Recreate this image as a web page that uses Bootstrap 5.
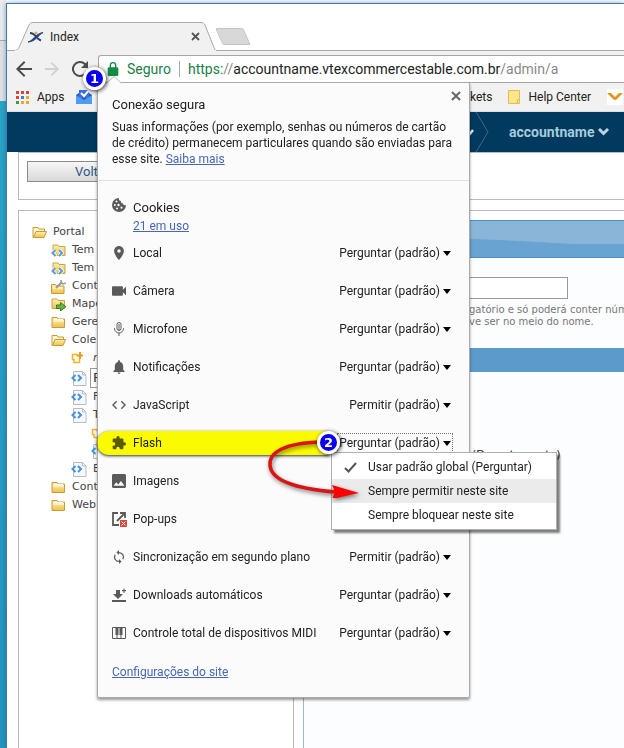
<!DOCTYPE html>
<html lang="pt-br">
<head>
<meta charset="utf-8">
<meta name="viewport" content="width=device-width, initial-scale=1">
<title>Index</title>
<link href="https://cdn.jsdelivr.net/npm/bootstrap@5.3.0/dist/css/bootstrap.min.css" rel="stylesheet">
<style>
  :root { --ui: Roboto, "Open Sans", sans-serif; --page: "DejaVu Sans", sans-serif; --ink: #5a5a5a; }
  body { font-family: var(--ui); font-size: 12px; line-height: 16px; color: #222; overflow: hidden; height: 100vh; }
  svg { flex: none; display: block; }
  .desktop { width: 6px; flex: none; background: linear-gradient(#e9edf2 40px, #aaa 40px, #aaa 41px, #dfe2e6 41px, #dfe2e6 101px, #2aa5c8 101px, #2495c0); }
  .browser { border: solid #3a7db8; border-width: 1px 0 0 1px; margin-top: 3px; min-width: 0; box-shadow: 0 0 5px rgba(30,70,110,.5); }
  .tab-strip { height: 47px; padding-left: 5px; border-bottom: 1px solid #a9a9a9; }
  .tab-item { width: 207px; height: 29px; margin-bottom: -1px; padding: 0 19px 0 16px; }
  .tab-shape { position: absolute; inset: 0; width: 100%; height: 100%; }
  .tab-icon { margin-right: 7px; }
  .new-tab { width: 28px; height: 17px; margin: 0 0 5px 0; transform: skewX(24deg); background: #d8d8d8; border: 1px solid #c4c4c4; border-radius: 2px; }
  .plain { background: none; border: 0; padding: 0; color: inherit; }
  .tool-bar { background: #f1f1f1; padding-top: 4px; }
  .nav-tools { width: 91px; padding-left: 8px; gap: 11px; color: #4c4c4c; }
  .omnibox { height: 28px; border: 1px solid #a6a6a6; border-right: 0; border-radius: 3px 0 0 0; padding-left: 8px; font-size: 14px; white-space: nowrap; }
  .secure { color: #188048; }
  .url-sep { width: 1px; height: 16px; background: #aaa; margin: 0 8px; }
  .pin-one { left: -16px; top: 11px; }
  .pin { position: absolute; z-index: 6; width: 23px; height: 23px; border-radius: 50%; background: #0b00ee; border: 3px solid #fff; box-shadow: 1px 1px 4px rgba(0,0,0,.8); color: #fff; font: bold 13px/17px var(--page); text-align: center; }
  .marks { height: 29px; background: #f1f1f1; padding-left: 9px; border-bottom: 1px solid #ddd; }
  .marks a { color: #222; text-decoration: none; }
  .marks-start { width: 454px; gap: 11px; }
  .site-nav { height: 40px; background: #013a5e; }
  .site-nav-start { width: 460px; }
  .account { font: bold 14px/20px Roboto, "Open Sans", sans-serif; color: #a6cbdc; }
  .site { padding-left: 11px; font-family: var(--page); font-size: 11px; }
  .bar-box { height: 48px; border: solid #bbb; border-width: 1px 0 1px 1px; padding: 8px 8px 0; margin-bottom: 10px; }
  .back { width: 140px; height: 21px; border: 1px solid #8c8c8c; background: linear-gradient(#f6f6f6, #d9d9d9); color: #2e5883; font: 13px/18px var(--ui); padding: 0 0 0 47px; text-align: left; }
  .main-box { border: solid #bbb; border-width: 1px 0 0 1px; }
  .tree { width: 275px; border-right: 1px solid #bbb; padding: 12px 0 0 13px; color: #444; }
  .tree li { height: 18px; gap: 6px; }
  .tree .lv1 { padding-left: 19px; }
  .tree .lv2 { padding-left: 39px; }
  .tree .lv3 { padding-left: 59px; }
  .tree .tall { height: 21px; }
  .rename { width: 60px; height: 20px; border: 1px solid #999; padding: 0 2px; font-size: 13px; margin-left: -3px; color: #333; }
  .panel { margin: 9px 0 0 9px; border-left: 1px solid #9dbbd0; background: #fcfdfe; min-width: 0; overflow: hidden; }
  .panel-head { height: 38px; border: solid #4b8fc4; border-width: 1px 0; background: #69a3d1; }
  .panel-head svg { width: 100%; height: 36px; }
  .field { width: 264px; height: 22px; border: 1px solid #999; background: #fff; display: block; margin-top: 19px; border-radius: 0; }
  .hint { padding: 5px 0 0 165px; font-size: 10px; line-height: 12px; color: #777; white-space: nowrap; margin: 0; }
  .band { height: 24px; background: #5b9acb; margin: 20px 0 75px; }
  .dept { padding-left: 168px; }
  .site-info { position: absolute; z-index: 3; top: 26px; left: -2px; width: 373px; background: #fbfbfb; border: 1px solid #aaa; border-radius: 2px; box-shadow: 0 2px 3px rgba(0,0,0,.4); font-size: 12px; color: #222; }
  .notch { position: absolute; top: -7px; left: 8px; }
  .info-head { padding: 12px 13px 13px 14px; border-bottom: 1px solid #e0e0e0; }
  .info-head h1 { font-size: 13px; font-weight: 400; line-height: 20px; margin: 0 0 4px; }
  .info-close { position: absolute; top: 8px; right: 8px; color: #666; }
  .site-info a { color: #4767b4; }
  .cookies { padding: 17px 14px 0; }
  .cookies-title { font-size: 13px; line-height: 20px; }
  .glyph { width: 14px; height: 14px; margin-right: 7px; fill: var(--ink); }
  .perm { height: 38px; padding: 0 16px 0 14px; position: relative; }
  .perm select { appearance: none; border: 0; background: none; padding: 0 13px 0 0; text-align: right; color: #222; height: 20px; outline: 0; }
  .pick { position: relative; }
  .pick::after { content: ""; position: absolute; right: 2px; top: 8px; border: 4px solid transparent; border-top: 5px solid #000; border-bottom: 0; pointer-events: none; }
  .pick.focused::before { content: ""; position: absolute; inset: 0 0 0 -2px; border: 1px dotted #777; pointer-events: none; }
  .marker { position: absolute; left: -1px; top: 7px; width: 232px; height: 24px; border-radius: 12px 0 0 12px; background: #ff0; mix-blend-mode: multiply; box-shadow: 0 1px 3px #333; }
  .pin-two { left: 219px; top: 7px; }
  .choices { position: absolute; z-index: 4; left: 233px; top: 28px; width: 226px; background: #fff; border: 1px solid #b0b0b0; box-shadow: 3px 3px 2px rgba(0,0,0,.5); padding: 2px 0; }
  .choices button { display: flex; align-items: center; width: 100%; height: 24px; padding-left: 12px; text-align: left; }
  .choices button.hot { background: #ebebeb; }
  .choices svg { margin-right: 11px; }
  .swoop { position: absolute; z-index: 5; left: 165px; top: 10px; filter: drop-shadow(1px 2px 2px rgba(0,0,0,.5)); }
  .info-foot { padding: 10px 14px 15px; line-height: 20px; }
</style>
<script src="https://cdn.jsdelivr.net/npm/bootstrap@5.3.0/dist/js/bootstrap.bundle.min.js"></script>
</head>
<body class="d-flex">
<svg width="0" height="0" class="position-absolute" aria-hidden="true">
  <defs>
    <linearGradient id="gold" x2="0" y2="1"><stop stop-color="#fff3ae"/><stop offset="1" stop-color="#f0c04c"/></linearGradient>
    <symbol id="folder" viewBox="0 0 15 13"><path d="M1 11.500V1.500h5l1 1.500h6.500v8.500z" fill="url(#gold)" stroke="#c99a3c"/><path d="M3 3.500h9M2 5h11" stroke="#fff" /></symbol>
    <symbol id="open" viewBox="0 0 15 13"><path d="M1 11.500V1.500h5l1 1.500h5.500v2" fill="#fff6cf" stroke="#c99a3c"/><path d="M1.300 11.500L4 5.500h10.500l-2.500 6z" fill="url(#gold)" stroke="#c99a3c"/></symbol>
    <symbol id="tpl" viewBox="0 0 15 13"><path d="M2 10V1h5l1 1.500h6v9H6" fill="url(#gold)" stroke="#c9a24c"/><path d="M4.500 6L1.500 9l3 3M8 6l3 3-3 3" fill="none" stroke="#fff" stroke-width="3.500"/><path d="M4.500 6L1.500 9l3 3M8 6l3 3-3 3" fill="none" stroke="#5b9bd2" stroke-width="2"/></symbol>
    <symbol id="fix" viewBox="0 0 15 15"><path d="M.5 14.500V5.500h4l1 1.500h7.500v7.500z" fill="url(#gold)" stroke="#c99a3c"/><path d="M2 9h10" stroke="#fff"/><path d="M5 9l6-6" stroke="#999" stroke-width="2"/><path d="M10 1v3l2 1 3-1" fill="none" stroke="#999" stroke-width="1.500"/></symbol>
    <symbol id="go" viewBox="0 0 15 13"><path d="M1 10.500V1h5l1 1.500h6.500v8z" fill="url(#gold)" stroke="#c9a24c"/><path d="M5.500 7h4V4.500L15 8.700 9.500 13v-2.500h-4z" fill="#69b346" stroke="#3c7d2a"/></symbol>
    <symbol id="page" viewBox="0 0 16 16"><path d="M2.500 1.500h9l3.500 3.500v10.500H2.500z" fill="#f6f9fc" stroke="#bbb"/><path d="M11.500 1.500V5H15" fill="none" stroke="#bbb"/><path d="M4.500 5L1.500 8l3 3M7 5l3 3-3 3" fill="none" stroke="#4292dc" stroke-width="2"/></symbol>
    <symbol id="add" viewBox="0 0 12 12"><path d="M6 2.500H1.500v5H3v3h5.500V7" fill="#fffbe5" stroke="#efb431" stroke-width="1.500"/><path d="M9 0v7M5.500 3.500H12" stroke="#f09a1c" stroke-width="2"/></symbol>
  </defs>
</svg>

<div class="desktop"></div>
<div class="browser flex-grow-1 bg-white d-flex flex-column position-relative">
  <div class="tab-strip d-flex align-items-end">
    <div class="tab-item position-relative d-flex align-items-center">
      <svg class="tab-shape" viewBox="0 0 207 29" preserveAspectRatio="none"><path d="M0 29V28.500c5 0 6-1 7-3L17 3c1-2 2-2.500 4-2.500h168c2 0 3 .5 4 2.500l9 22.500c1 2 1 3 3 3V29z" fill="#f1f1f1" stroke="#a9a9a9"/><path d="M3 29h201" stroke="#f1f1f1" stroke-width="2"/></svg>
      <svg class="tab-icon position-relative" width="15" height="12" viewBox="0 0 15 12"><path d="M2 2c3 0 4.500 1.500 6 3.500S11 9 13 9.500" fill="none" stroke="#24417c" stroke-width="2"/><path d="M0 11c5-1 7-8 15-9.500C10 4 8 10.500 0 11z" fill="#24417c" stroke="#24417c"/><circle cx="8" cy="2" r="1.500" fill="#e8a433"/></svg>
      <span class="position-relative flex-grow-1">Index</span>
      <button class="plain position-relative" aria-label="Fechar guia"><svg width="9" height="9" viewBox="0 0 9 9"><path d="M1 1l7 7M8 1L1 8" stroke="#555" stroke-width="1.800"/></svg></button>
    </div>
    <button class="new-tab p-0" aria-label="Nova guia"></button>
  </div>

  <div class="tool-bar d-flex">
    <div class="nav-tools d-flex align-items-center flex-shrink-0">
      <button class="plain" aria-label="Voltar"><svg width="18" height="18" viewBox="3 3 18 18" fill="#4c4c4c"><path d="M20 11H7.830l5.590-5.590L12 4l-8 8 8 8 1.410-1.410L7.830 13H20z"/></svg></button>
      <button class="plain" aria-label="Avançar"><svg width="16" height="16" viewBox="3 3 18 18" fill="#d0d0d0"><path d="M4 11h12.170l-5.590-5.590L12 4l8 8-8 8-1.410-1.410L16.170 13H4z"/></svg></button>
      <button class="plain" aria-label="Recarregar"><svg width="18" height="18" viewBox="3 3 18 18" fill="#4c4c4c"><path d="M17.650 6.350A8 8 0 1 0 19.730 14h-2.080A6 6 0 1 1 16.220 7.780L13 11h7V4z"/></svg></button>
    </div>
    <div class="omnibox bg-white flex-grow-1 position-relative d-flex align-items-center">
      <svg width="12" height="14" viewBox="4 1 16 21" fill="#128c44"><path d="M18 9h-1V6A5 5 0 0 0 7 6v3H6c-1 0-2 1-2 2v9c0 1 1 2 2 2h12c1 0 2-1 2-2v-9c0-1-1-2-2-2zM9 9V6a3 3 0 0 1 6 0v3z"/></svg>
      <span class="secure ms-2">Seguro</span><span class="url-sep"></span>
      <span><span class="secure">https:</span><span class="text-black-50">//</span>accountname.vtexcommercestable.com.br<span class="text-black-50">/admin/a</span></span>
      <span class="pin pin-one">1</span>

      <section class="site-info" aria-label="Informações do site">
        <svg class="notch" width="16" height="8" viewBox="0 0 16 8"><path d="M0 7.500L8 .5l8 7" fill="#fbfbfb" stroke="#bbb"/></svg>
        <div class="info-head">
          <button class="info-close plain" aria-label="Fechar"><svg width="10" height="10" viewBox="0 0 10 10"><path d="M1 1l8 8M9 1L1 9" stroke="#666" stroke-width="2"/></svg></button>
          <h1>Conexão segura</h1>
          <div>Suas informações (por exemplo, senhas ou números de cartão<br>de crédito) permanecem particulares quando são enviadas para<br>esse site. <a href="#">Saiba mais</a></div>
        </div>
        <div class="cookies d-flex align-items-start">
          <svg class="glyph" viewBox="0 0 14 14"><path d="M7 0a7 7 0 1 0 7 7c-2 .8-3-.3-2.800-1.500C9.500 5.600 8.500 4.500 9 3 7.500 3 6.500 1.800 7 0z"/><g fill="#fbfbfb"><circle cx="4.500" cy="3.500" r="1"/><circle cx="2.800" cy="7" r="1"/><circle cx="6.500" cy="7" r="1.200"/><circle cx="5" cy="10.500" r="1"/><circle cx="9.500" cy="9.700" r="1.100"/></g></svg>
          <div><div class="cookies-title">Cookies</div><a href="#">21 em uso</a></div>
        </div>
        <div class="perm d-flex align-items-center">
          <svg class="glyph" viewBox="2 2 20 20"><path d="M12 2C8.130 2 5 5.130 5 9c0 5.250 7 13 7 13s7-7.750 7-13c0-3.870-3.130-7-7-7zm0 9.500a2.500 2.500 0 0 1 0-5 2.500 2.500 0 0 1 0 5z"/></svg>
          <label for="p1" class="flex-grow-1">Local</label><span class="pick"><select id="p1"><option>Perguntar (padrão)</option></select></span>
        </div>
        <div class="perm d-flex align-items-center">
          <svg class="glyph" viewBox="3 3 18 18"><path d="M17 10.500V7c0-.55-.45-1-1-1H4c-.55 0-1 .45-1 1v10c0 .55.45 1 1 1h12c.55 0 1-.45 1-1v-3.500l4 4v-11z"/></svg>
          <label for="p2" class="flex-grow-1">Câmera</label><span class="pick"><select id="p2"><option>Perguntar (padrão)</option></select></span>
        </div>
        <div class="perm d-flex align-items-center">
          <svg class="glyph" viewBox="0 0 14 14"><g fill="none" stroke="#5a5a5a"><rect x="5" y=".5" width="4" height="8" rx="2"/><path d="M6 3h2M6 5h2M6 7h2M2.500 6v.5a4.500 4.500 0 0 0 9 0V6M7 11v3"/></g></svg>
          <label for="p3" class="flex-grow-1">Microfone</label><span class="pick"><select id="p3"><option>Perguntar (padrão)</option></select></span>
        </div>
        <div class="perm d-flex align-items-center">
          <svg class="glyph" viewBox="2 2 20 20"><path d="M12 22c1.100 0 2-.9 2-2h-4c0 1.100.89 2 2 2zm6-6v-5c0-3.070-1.640-5.640-4.500-6.320V4c0-.83-.67-1.500-1.500-1.500s-1.500.67-1.500 1.500v.68C7.630 5.360 6 7.920 6 11v5l-2 2v1h16v-1z"/></svg>
          <label for="p4" class="flex-grow-1">Notificações</label><span class="pick"><select id="p4"><option>Perguntar (padrão)</option></select></span>
        </div>
        <div class="perm d-flex align-items-center">
          <svg class="glyph" viewBox="2 2 20 20"><path d="M9.400 16.600L4.800 12l4.600-4.600L8 6l-6 6 6 6zm5.200 0l4.600-4.600-4.600-4.600L16 6l6 6-6 6z"/></svg>
          <label for="p5" class="flex-grow-1">JavaScript</label><span class="pick"><select id="p5"><option>Permitir (padrão)</option></select></span>
        </div>
        <div class="perm d-flex align-items-center">
          <svg class="glyph" viewBox="1 1 22 22"><path d="M20.500 11H19V7c0-1.100-.9-2-2-2h-4V3.500a2.500 2.500 0 0 0-5 0V5H4c-1.100 0-2 .9-2 2v3.800h1.500a2.700 2.700 0 0 1 0 5.400H2V20c0 1.100.9 2 2 2h3.800v-1.500a2.700 2.700 0 0 1 5.400 0V22H17c1.100 0 2-.9 2-2v-4h1.500a2.500 2.500 0 0 0 0-5z"/></svg>
          <label for="p6" class="flex-grow-1">Flash</label><span class="pick focused"><select id="p6"><option>Perguntar (padrão)</option></select></span>
          <span class="marker"></span>
          <svg class="swoop" width="98" height="64" viewBox="0 0 98 64"><path d="M58 8C22 9 6 18 7 31c1 16 28 24 66 27" fill="none" stroke="#d81414" stroke-width="3.500"/><path d="M69 51l27 8-27 6 3-7z" fill="#f00"/></svg>
          <span class="pin pin-two">2</span>
          <div class="choices">
            <button class="plain"><svg width="13" height="11" viewBox="0 0 13 11"><path d="M1 6l3.500 3.500L12 1" fill="none" stroke="#555" stroke-width="2"/></svg>Usar padrão global (Perguntar)</button>
            <button class="plain hot"><svg width="13" height="11"></svg>Sempre permitir neste site</button>
            <button class="plain"><svg width="13" height="11"></svg>Sempre bloquear neste site</button>
          </div>
        </div>
        <div class="perm d-flex align-items-center">
          <svg class="glyph" viewBox="3 3 18 18"><path d="M21 19V5c0-1.100-.9-2-2-2H5c-1.100 0-2 .9-2 2v14c0 1.100.9 2 2 2h14c1.100 0 2-.9 2-2zM8.500 13.500l2.500 3 3.500-4.500 4.500 6H5z"/></svg>
          <span>Imagens</span>
        </div>
        <div class="perm d-flex align-items-center">
          <svg class="glyph overflow-visible" viewBox="0 0 14 14"><path d="M6 1H1v12h6M8 1h5v5M13 1L5 9" fill="none" stroke="#5a5a5a" stroke-width="1.800"/><path d="M8 8h7v7H8z" fill="#d9473c"/><path d="M9.500 9.500l4 4m0-4l-4 4" stroke="#fff"/></svg>
          <span>Pop-ups</span>
        </div>
        <div class="perm d-flex align-items-center">
          <svg class="glyph" viewBox="1 1 22 22"><path d="M12 4V1L8 5l4 4V6a6 6 0 0 1 5.300 8.800l1.460 1.460A8 8 0 0 0 12 4zm0 14a6 6 0 0 1-5.300-8.800L5.240 7.740A8 8 0 0 0 12 20v3l4-4-4-4z"/></svg>
          <label for="p9" class="flex-grow-1">Sincronização em segundo plano</label><span class="pick"><select id="p9"><option>Permitir (padrão)</option></select></span>
        </div>
        <div class="perm d-flex align-items-center">
          <svg class="glyph" viewBox="0 0 14 14"><path d="M0 12h14v2H0zM4 2h4v4h3l-5 5-5-5h3zM10 2h1.500V.5h1V2H14v1.200h-1.500V5h-1V3.200H10z"/></svg>
          <label for="p10" class="flex-grow-1">Downloads automáticos</label><span class="pick"><select id="p10"><option>Perguntar (padrão)</option></select></span>
        </div>
        <div class="perm d-flex align-items-center">
          <svg class="glyph" viewBox="0 0 14 14"><path d="M.5 1.500h13v11H.5zM5 9v4M9 9v4" fill="none" stroke="#5a5a5a"/><path d="M3.500 1h3v8h-3zM7.500 1h3v8h-3z"/></svg>
          <label for="p11" class="flex-grow-1">Controle total de dispositivos MIDI</label><span class="pick"><select id="p11"><option>Perguntar (padrão)</option></select></span>
        </div>
        <div class="info-foot"><a href="#">Configurações do site</a></div>
      </section>
    </div>
  </div>

  <nav class="marks d-flex align-items-center">
    <div class="marks-start d-flex align-items-center flex-shrink-0">
      <a href="#" class="d-flex align-items-center"><svg class="me-2" width="13" height="13" viewBox="0 0 13 13"><path d="M0 0h3v3H0zM5 0h3v3H5zM10 0h3v3h-3zM0 5h3v3H0z" fill="#d9453a"/><path d="M5 5h3v3H5z" fill="#3c7ee0"/><path d="M10 5h3v3h-3zM5 10h3v3H5zM10 10h3v3h-3z" fill="#e6ac2a"/><path d="M0 10h3v3H0z" fill="#3b9b52"/></svg>Apps</a>
      <a href="#" aria-label="Inbox"><svg width="16" height="16" viewBox="0 0 16 16"><path d="M0 6l3-2V1h10v3l3 2v9H0z" fill="#2b57b5"/><path d="M3 1h10v8H3z" fill="#3a6fe0"/><path d="M5 4l3 3 6-7" fill="none" stroke="#fff" stroke-width="2"/><path d="M0 6l8 5 8-5v9H0z" fill="#4f9cf0"/></svg></a>
    </div>
    <a href="#" class="flex-shrink-0">kets</a>
    <a href="#" class="d-flex align-items-center flex-shrink-0 ms-3"><svg class="me-2" width="12" height="14" viewBox="0 0 12 14"><path d="M.5.5h11v13H.5z" fill="#fde68e" stroke="#e5bd49"/><path d="M9.500 13V9.500h2" fill="none" stroke="#e5bd49"/></svg>Help Center</a>
    <a href="#" class="ms-3" aria-label="VTEX"><svg width="16" height="16" viewBox="0 0 16 16"><path d="M0 0h16v16H0z" fill="#fff"/><path d="M0 4h4l4 4 4-4h4l-6 6c-1.500 1.500-2.500 1.500-4 0z" fill="#e19522"/></svg></a>
  </nav>

  <div class="site-nav d-flex align-items-center flex-shrink-0">
    <div class="site-nav-start flex-shrink-0"></div>
    <svg width="26" height="40" viewBox="0 0 26 40" fill="none"><path d="M0 21l2 2 4-5" stroke="#d8e7ef" stroke-width="2.500"/><path d="M9 0l12 20L9 40" stroke="#3c6b87"/></svg>
    <a href="#" class="account d-flex align-items-center text-decoration-none ms-3">accountname<svg class="ms-1" width="11" height="8" viewBox="0 0 11 8"><path d="M1 1l4.500 4.500L10 1" fill="none" stroke="#b9d5e2" stroke-width="3"/></svg></a>
  </div>

  <main class="site flex-grow-1 d-flex flex-column">
    <div class="bar-box"><button class="back">Volt</button></div>
    <div class="main-box flex-grow-1 d-flex">
      <ul class="tree list-unstyled mb-0 flex-shrink-0">
        <li class="d-flex align-items-center"><svg width="15" height="13"><use href="#open"/></svg>Portal</li>
        <li class="lv1 d-flex align-items-center"><svg width="15" height="13"><use href="#tpl"/></svg>Tem</li>
        <li class="lv1 d-flex align-items-center"><svg width="15" height="13"><use href="#tpl"/></svg>Tem</li>
        <li class="lv1 d-flex align-items-center"><svg width="15" height="15"><use href="#fix"/></svg>Cont</li>
        <li class="lv1 d-flex align-items-center"><svg width="15" height="13"><use href="#go"/></svg>Mape</li>
        <li class="lv1 d-flex align-items-center"><svg width="15" height="13"><use href="#folder"/></svg>Gere</li>
        <li class="lv1 d-flex align-items-center"><svg width="15" height="13"><use href="#open"/></svg>Cole</li>
        <li class="lv2 d-flex align-items-center"><svg class="me-1" width="12" height="12"><use href="#add"/></svg><i>n</i></li>
        <li class="lv2 tall d-flex align-items-center"><svg width="16" height="16"><use href="#page"/></svg><input class="rename" value="F" aria-label="Nome"></li>
        <li class="lv2 d-flex align-items-center"><svg width="16" height="16"><use href="#page"/></svg>F</li>
        <li class="lv2 d-flex align-items-center"><svg width="16" height="16"><use href="#page"/></svg>T</li>
        <li class="lv3 d-flex align-items-center"><svg width="12" height="12"><use href="#add"/></svg></li>
        <li class="lv3 d-flex align-items-center"><svg width="16" height="16"><use href="#page"/></svg></li>
        <li class="lv2 d-flex align-items-center"><svg width="16" height="16"><use href="#page"/></svg>E</li>
        <li class="lv1 d-flex align-items-center"><svg width="15" height="13"><use href="#folder"/></svg>Cont</li>
        <li class="lv1 d-flex align-items-center"><svg width="15" height="13"><use href="#folder"/></svg>Web</li>
      </ul>
      <div class="panel flex-grow-1">
        <div class="panel-head"><svg viewBox="0 0 320 36" preserveAspectRatio="none"><path d="M0 0h320v23H270Q220 20 170 18L0 12z" fill="#8ab5d9"/></svg></div>
        <input class="field" aria-label="Nome">
        <p class="hint">gatório e só poderá conter núm<br>ve ser no meio do nome.</p>
        <div class="band"></div>
        <div class="dept">(Departamento)</div>
      </div>
    </div>
  </main>
</div>
</body>
</html>
